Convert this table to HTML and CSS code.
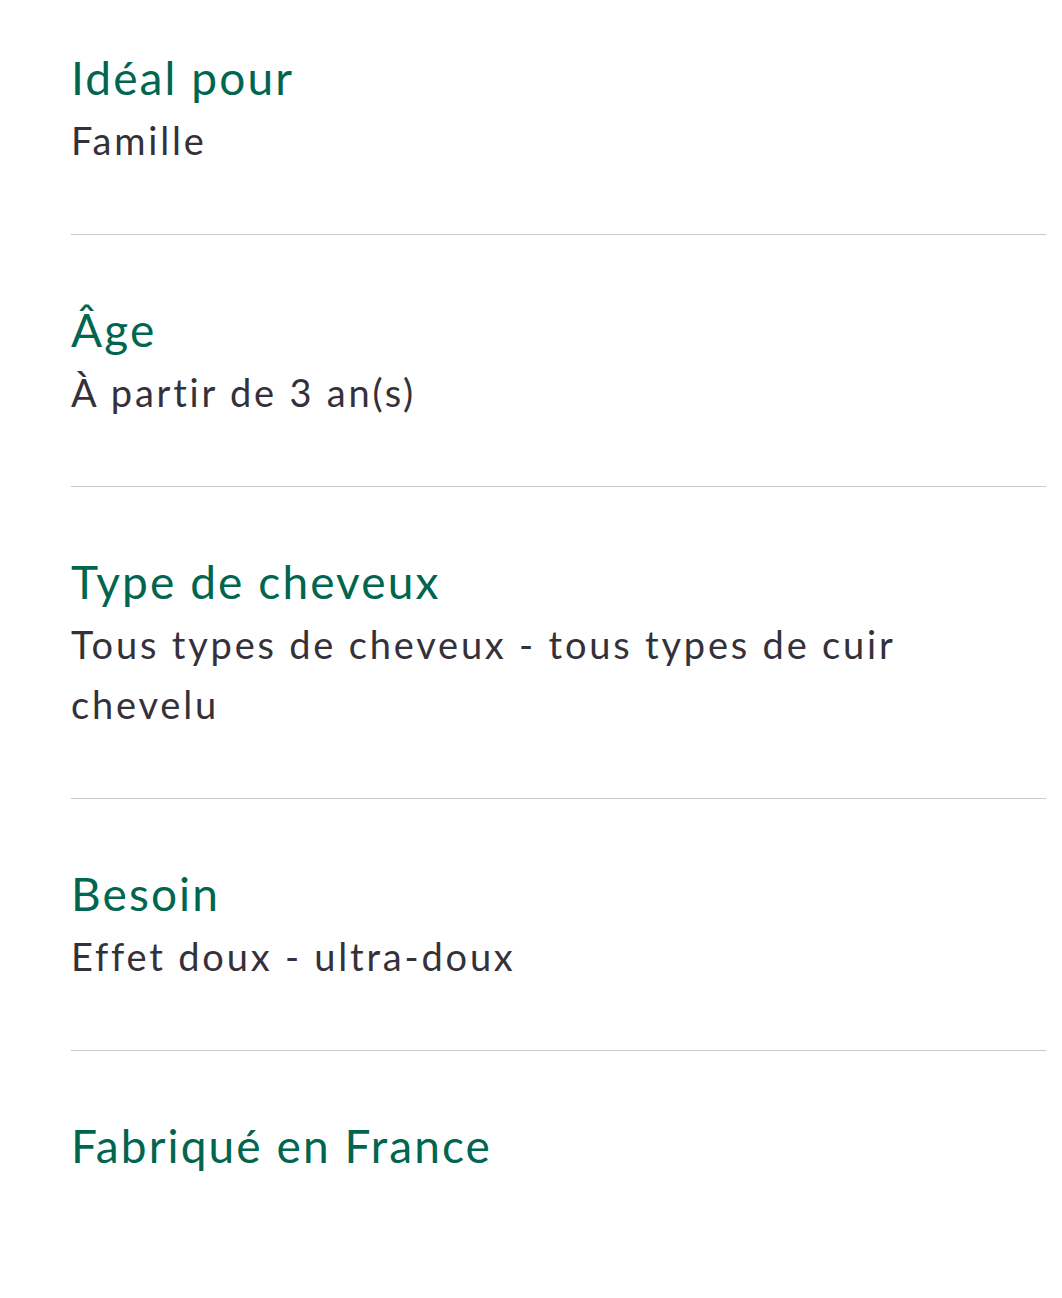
FILE: index.html
```html
<!DOCTYPE html>
<html lang="fr">
<head>
<meta charset="utf-8">
<title>Caractéristiques</title>
<link rel="stylesheet" href="styles.css">
</head>
<body>
<div class="specs">
  <div class="spec spec-first">
    <div class="spec-title">Idéal pour</div>
    <div class="spec-value">Famille</div>
  </div>
  <div class="spec">
    <div class="spec-title">Âge</div>
    <div class="spec-value">À partir de 3 an(s)</div>
  </div>
  <div class="spec">
    <div class="spec-title">Type de cheveux</div>
    <div class="spec-value">Tous types de cheveux - tous types de cuir chevelu</div>
  </div>
  <div class="spec">
    <div class="spec-title">Besoin</div>
    <div class="spec-value">Effet doux - ultra-doux</div>
  </div>
  <div class="spec">
    <div class="spec-title">Fabriqué en France</div>
  </div>
</div>
</body>
</html>
```
FILE: styles.css
```css
html, body {
  margin: 0;
  padding: 0;
  background: #ffffff;
}
body {
  font-family: "Lato", "Liberation Sans", sans-serif;
}
.specs {
  padding: 0 16px 0 71px;
}
.spec {
  border-top: 1px solid #c9c9c9;
  padding: 65px 0 64px;
}
.spec-first {
  border-top: none;
  padding-top: 48px;
}
.spec-title {
  font-size: 46px;
  line-height: 60px;
  color: #006650;
  letter-spacing: 2.1px;
}
.spec-value {
  font-size: 38px;
  line-height: 60px;
  color: #35313a;
  letter-spacing: 2.8px;
  padding-top: 2px;
  padding-right: 100px;
}
```
